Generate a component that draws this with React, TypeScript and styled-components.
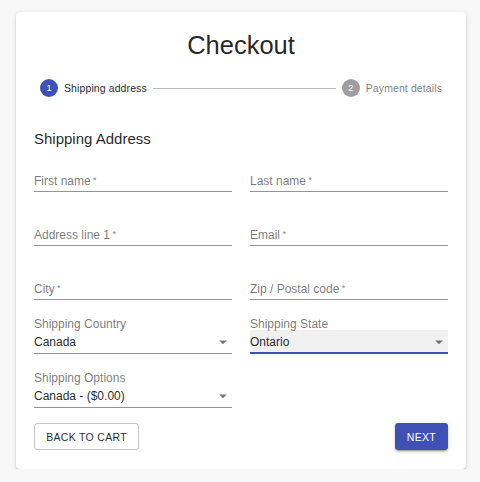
import React from "react";
import styled, { createGlobalStyle } from "styled-components";

const GlobalStyle = createGlobalStyle`
  html, body { margin: 0; padding: 0; }
  body {
    background: #f8f8f8;
    font-family: "Liberation Sans", Arial, Helvetica, sans-serif;
    color: rgba(0, 0, 0, 0.87);
  }
  * { box-sizing: border-box; }
`;

const Page = styled.div`
  padding: 12px 0 0 16px;
`;

const Card = styled.main`
  width: 450px;
  background: #fff;
  border-radius: 4px;
  padding: 18px 18px 19px;
  box-shadow: 0px 3px 1px -2px rgba(0, 0, 0, 0.2), 0px 2px 2px 0px rgba(0, 0, 0, 0.14),
    0px 1px 5px 0px rgba(0, 0, 0, 0.12);
`;

const Title = styled.h1`
  margin: 0;
  font-size: 25.5px;
  font-weight: 400;
  line-height: 1.235;
  text-align: center;
  color: rgba(0, 0, 0, 0.87);
`;

const Stepper = styled.div`
  display: flex;
  align-items: center;
  padding: 18px 0 30px;
`;

const Step = styled.div`
  display: flex;
  align-items: center;
  padding: 0 6px;
`;

const StepIcon = styled.span<{ $active?: boolean }>`
  width: 18px;
  height: 18px;
  border-radius: 50%;
  background: ${(p) => (p.$active ? "#3f51b5" : "rgba(0,0,0,0.38)")};
  color: #fff;
  font-size: 9px;
  display: flex;
  align-items: center;
  justify-content: center;
`;

const StepLabel = styled.span<{ $active?: boolean }>`
  padding-left: 6px;
  font-size: 10.5px;
  line-height: 1.43;
  letter-spacing: 0.01em;
  color: ${(p) => (p.$active ? "rgba(0,0,0,0.87)" : "rgba(0,0,0,0.54)")};
`;

const Connector = styled.span`
  flex: 1;
  border-top: 1px solid #bdbdbd;
`;

const Heading = styled.h2`
  margin: 0 0 5px;
  font-size: 15px;
  font-weight: 400;
  line-height: 1.6;
  color: rgba(0, 0, 0, 0.87);
`;

const FormGrid = styled.div`
  display: grid;
  grid-template-columns: 1fr 1fr;
  column-gap: 18px;
  row-gap: 18px;
`;

const Field = styled.div`
  display: flex;
  flex-direction: column;
  justify-content: flex-end;
  height: 36px;
`;

const FieldLabel = styled.label`
  font-size: 12px;
  line-height: 12px;
  color: rgba(0, 0, 0, 0.54);
  margin-bottom: auto;
`;

const InputArea = styled.div<{ $focused?: boolean }>`
  position: relative;
  height: 24px;
  padding: 4.5px 0 5.25px;
  font-size: 12px;
  line-height: 14.25px;
  border-bottom: 1px solid ${(p) => (p.$focused ? "#3f51b5" : "rgba(0,0,0,0.42)")};
  background: ${(p) => (p.$focused ? "rgba(0,0,0,0.055)" : "transparent")};
  box-shadow: ${(p) => (p.$focused ? "inset 0 -1px 0 #3f51b5" : "none")};
`;

const Placeholder = styled.span`
  color: rgba(0, 0, 0, 0.54);
`;

const Asterisk = styled.span`
  font-size: 9px;
  vertical-align: 2px;
`;

const Value = styled.span`
  color: rgba(0, 0, 0, 0.87);
`;

const Arrow = styled.svg`
  position: absolute;
  right: 0;
  top: 3px;
  width: 18px;
  height: 18px;
  fill: rgba(0, 0, 0, 0.54);
`;

const Actions = styled.div`
  display: flex;
  justify-content: space-between;
  margin-top: 15px;
`;

const BaseButton = styled.button`
  height: 27px;
  font-family: inherit;
  font-size: 10.5px;
  font-weight: 500;
  letter-spacing: 0.02857em;
  text-transform: uppercase;
  border-radius: 3px;
  cursor: pointer;
`;

const OutlinedButton = styled(BaseButton)`
  padding: 0 11.25px;
  background: transparent;
  color: rgba(0, 0, 0, 0.87);
  border: 1px solid rgba(0, 0, 0, 0.23);
`;

const ContainedButton = styled(BaseButton)`
  padding: 0 12px;
  background: #3f51b5;
  color: #fff;
  border: none;
  box-shadow: 0px 3px 1px -2px rgba(0, 0, 0, 0.2), 0px 2px 2px 0px rgba(0, 0, 0, 0.14),
    0px 1px 5px 0px rgba(0, 0, 0, 0.12);
`;

const TextField = ({ label }: { label: string }) => (
  <Field>
    <InputArea>
      <Placeholder>
        {label}
        {"\u2009"}
        <Asterisk>*</Asterisk>
      </Placeholder>
    </InputArea>
  </Field>
);

const SelectField = ({
  label,
  value,
  focused,
}: {
  label: string;
  value: string;
  focused?: boolean;
}) => (
  <Field>
    <FieldLabel>{label}</FieldLabel>
    <InputArea $focused={focused}>
      <Value>{value}</Value>
      <Arrow viewBox="0 0 24 24">
        <path d="M7 10l5 5 5-5z" />
      </Arrow>
    </InputArea>
  </Field>
);

export default function App() {
  return (
    <>
      <GlobalStyle />
      <Page>
        <Card>
          <Title>Checkout</Title>
          <Stepper>
            <Step>
              <StepIcon $active>1</StepIcon>
              <StepLabel $active>Shipping address</StepLabel>
            </Step>
            <Connector />
            <Step>
              <StepIcon>2</StepIcon>
              <StepLabel>Payment details</StepLabel>
            </Step>
          </Stepper>
          <Heading>Shipping Address</Heading>
          <FormGrid>
            <TextField label="First name" />
            <TextField label="Last name" />
            <TextField label="Address line 1" />
            <TextField label="Email" />
            <TextField label="City" />
            <TextField label="Zip / Postal code" />
            <SelectField label="Shipping Country" value="Canada" />
            <SelectField label="Shipping State" value="Ontario" focused />
            <SelectField label="Shipping Options" value="Canada - ($0.00)" />
          </FormGrid>
          <Actions>
            <OutlinedButton>Back to cart</OutlinedButton>
            <ContainedButton>Next</ContainedButton>
          </Actions>
        </Card>
      </Page>
    </>
  );
}
